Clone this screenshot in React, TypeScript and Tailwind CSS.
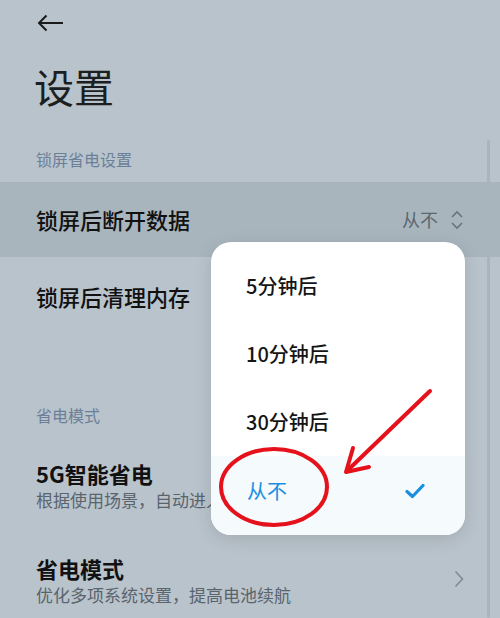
import React from "react";

const cjk = { fontFamily: '"Noto Sans CJK SC", "Noto Sans", sans-serif' };

const options = ["5分钟后", "10分钟后", "30分钟后"];

export default function App() {
  return (
    <div
      className="relative w-[500px] h-[618px] overflow-hidden bg-[#b9c3cb] text-[#111]"
      style={cjk}
    >
      {/* Back arrow */}
      <div className="h-[45px] pl-[37px] flex items-center">
        <svg width="27" height="18" viewBox="0 0 27 18" fill="none">
          <path d="M26 9H2M9.5 1.5L2 9l7.5 7.5" stroke="#1a1a1a" strokeWidth="2" />
        </svg>
      </div>

      {/* Title */}
      <div className="h-[90px] pl-[34px] pb-[8px] flex items-center text-[40px] leading-none font-normal text-[#1b1f22]">
        设置
      </div>

      {/* Section header */}
      <div className="h-[47px] pl-[36px] flex items-center text-[16px] text-[#6b7f99]">
        锁屏省电设置
      </div>

      {/* Row: highlighted */}
      <div className="h-[75px] px-[36px] flex items-center justify-between bg-[#a9b5bd]">
        <span className="text-[22px] font-medium">锁屏后断开数据</span>
        <div className="flex items-center gap-[12px]">
          <span className="text-[18px] text-[#5b666e]">从不</span>
          <svg width="14" height="22" viewBox="0 0 14 22" fill="none">
            <path d="M2 8l5-5 5 5M2 14l5 5 5-5" stroke="#69747c" strokeWidth="1.6" />
          </svg>
        </div>
      </div>

      {/* Row 2 */}
      <div className="h-[78px] pl-[36px] flex items-center">
        <span className="text-[22px] font-medium">锁屏后清理内存</span>
      </div>

      {/* Section header 2 */}
      <div className="h-[50px] mt-[55px] pl-[36px] flex items-center text-[16px] text-[#6b7f99]">
        省电模式
      </div>

      {/* 5G row */}
      <div className="pl-[36px] pt-[19px] flex flex-col">
        <span className="text-[22px] font-bold leading-[28px]">5G智能省电</span>
        <span className="w-[175px] overflow-hidden text-[17px] text-[#5a646d] leading-[26px] whitespace-nowrap">
          根据使用场景，自动进入省电模式
        </span>
      </div>

      {/* Power saving row */}
      <div className="mt-[41px] pl-[36px] pr-[36px] flex items-center justify-between">
        <div className="flex flex-col">
          <span className="text-[22px] font-bold leading-[28px]">省电模式</span>
          <span className="text-[17px] text-[#5a646d] leading-[26px]">
            优化多项系统设置，提高电池续航
          </span>
        </div>
        <svg width="10" height="18" viewBox="0 0 10 18" fill="none" className="-mt-[4px]">
          <path d="M1.5 1.5L8.5 9l-7 7.5" stroke="#7f8a93" strokeWidth="1.6" />
        </svg>
      </div>

      {/* Scrollbar */}
      <div className="absolute left-[487px] top-[140px] w-[3px] h-[478px] bg-[#aab4bc] rounded-full" />

      {/* Popup menu */}
      <div className="absolute left-[211px] top-[242px] w-[254px] h-[293px] bg-white rounded-[20px] shadow-[0_4px_18px_rgba(0,0,0,0.12)] overflow-hidden flex flex-col pt-[10px]">
        {options.map((o) => (
          <div key={o} className="h-[68px] pl-[35px] flex items-center text-[20px] font-medium text-[#151515]">
            {o}
          </div>
        ))}
        <div className="flex-1 pl-[36px] pr-[40px] flex items-center justify-between bg-[#f5fafd] pb-[10px]">
          <span className="text-[20px] text-[#1a8fe0]">从不</span>
          <svg width="20" height="16" viewBox="0 0 20 16" fill="none">
            <path d="M2 8.5l5.5 5L18 2.5" stroke="#1a8fe0" strokeWidth="3.2" strokeLinecap="round" strokeLinejoin="round" />
          </svg>
        </div>
      </div>

      {/* Red annotation */}
      <svg className="absolute left-0 top-0 pointer-events-none" width="500" height="618" viewBox="0 0 500 618" fill="none">
        <ellipse cx="274" cy="487" rx="53" ry="38" stroke="#e5121b" strokeWidth="4" />
        <path d="M430 391L349 469" stroke="#e5121b" strokeWidth="4" strokeLinecap="round" />
        <path d="M353 448L346 472L369 467" stroke="#e5121b" strokeWidth="4" strokeLinecap="round" strokeLinejoin="round" />
      </svg>
    </div>
  );
}
